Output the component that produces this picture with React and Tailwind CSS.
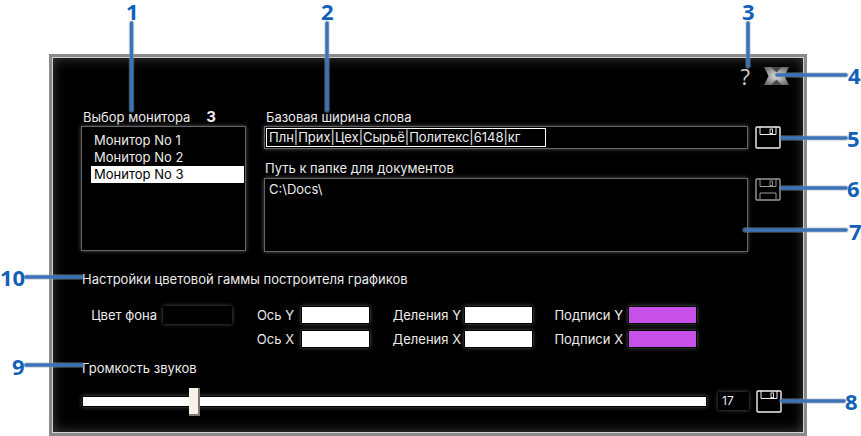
const glow = "shadow-[0_0_4px_rgba(255,255,255,0.35)]";

function SaveIcon({ dim }) {
  const c = dim ? "#9a9a9a" : "#f2f2f2";
  return (
    <button className="w-[26px] h-[23px] block shrink-0">
      <svg width="26" height="23" viewBox="0 0 26 23" fill="none">
        <rect x="1" y="1" width="24" height="21" rx="1" stroke={c} strokeWidth="1.4" />
        <path d="M5 1v7.5h16V1" stroke={c} strokeWidth="1" />
        <rect x="15" y="3" width="2.5" height="4.5" stroke={c} strokeWidth="0.9" />
        {dim && <path d="M5 21v-6h16v6" stroke={c} strokeWidth="1" />}
      </svg>
    </button>
  );
}

function CloseIcon() {
  return (
    <svg width="27" height="20" viewBox="0 0 27 20" className="blur-[0.7px]">
      <defs>
        <radialGradient id="xg" cx="50%" cy="50%" r="60%">
          <stop offset="0%" stopColor="#e4e4e4" />
          <stop offset="100%" stopColor="#6a6a6a" />
        </radialGradient>
      </defs>
      <path d="M1 1H26L21.5 10L26 19H1L5.5 10Z" fill="url(#xg)" />
      <path d="M8 1L13.5 6.5L19 1ZM8 19L13.5 13.5L19 19Z" fill="#4a4a4a" />
    </svg>
  );
}

function Swatch({ color }) {
  return <div className={`w-[69px] h-[18px] border border-black shrink-0 ${color} ${glow}`} />;
}

function ColorField({ label, color, gap }) {
  return (
    <div className={`flex items-center justify-end ${gap}`}>
      <span>{label}</span>
      <Swatch color={color} />
    </div>
  );
}

const callouts = [
  { n: "1", x: 126, y: 0 },
  { n: "2", x: 321, y: 0 },
  { n: "3", x: 742, y: 0 },
  { n: "4", x: 848, y: 64 },
  { n: "5", x: 847, y: 127 },
  { n: "6", x: 847, y: 177 },
  { n: "7", x: 849, y: 220 },
  { n: "8", x: 845, y: 390 },
  { n: "9", x: 12, y: 355 },
  { n: "10", x: 0, y: 266 },
];

const leaders = [
  "M131.5 23V110",
  "M327 23V110",
  "M748 23V66",
  "M777 75H846",
  "M782 138H846",
  "M782 188H846",
  "M745 230H846",
  "M782 401H844",
  "M26 365H82",
  "M26 277H81",
];

export default function App() {
  return (
    <div className="relative w-[861px] h-[436px] bg-white overflow-hidden font-['Inter',sans-serif]">
      <div className="absolute left-[49px] top-[54px] w-[758px] h-[382px] border-[3px] border-[#8a8a8a] bg-black shadow-[inset_0_0_0_1px_#c8c8c8]">
        <div className="h-full pl-[29px] pr-[23px] pt-[8px] text-[13px] leading-[16px] text-[#ececec] shadow-[inset_0_0_14px_rgba(255,255,255,0.28)]">
          <div className="flex justify-end items-center gap-[13px] -mr-[9px] h-[22px]">
            <span className="text-[22px] leading-none text-[#cfcfcf] font-['Open_Sans',sans-serif]">?</span>
            <CloseIcon />
          </div>

          <div className="flex gap-[18px] mt-[21px]">
            <div className="w-[165px] shrink-0">
              <div className="flex justify-between h-[18px] pl-[2px] pr-[30px] items-center">
                <span>Выбор монитора</span>
                <span className="font-bold text-[15px]">З</span>
              </div>
              <div className={`h-[125px] px-[9px] py-[5px] border border-[#666] ${glow}`}>
                <div className="pl-[3px] h-[17px] leading-[17px]">Монитор No 1</div>
                <div className="pl-[3px] h-[17px] leading-[17px]">Монитор No 2</div>
                <div className="pl-[3px] h-[17px] leading-[17px] w-[153px] bg-white text-black outline-1 outline-dotted outline-black">Монитор No 3</div>
              </div>
            </div>

            <div className="flex-1">
              <div className="h-[18px] pl-[2px] flex items-center">Базовая ширина слова</div>
              <div className="flex gap-[7px] items-start">
                <div className={`flex-1 h-[23px] border border-[#666] p-[1px] ${glow}`}>
                  <div className="w-[280px] h-[19px] border border-white leading-[17px] pl-[2px] whitespace-nowrap">Плн|Прих|Цех|Сырьё|Политекс|6148|кг</div>
                </div>
                <SaveIcon />
              </div>
              <div className="h-[18px] mt-[10px] pl-[1px] flex items-center">Путь к папке для документов</div>
              <div className="flex gap-[7px] items-start mt-[1px]">
                <div className={`flex-1 h-[74px] border border-[#666] px-[4px] py-[2px] ${glow}`}>C:\Docs\</div>
                <SaveIcon dim />
              </div>
            </div>
          </div>

          <div className="mt-[18px] pl-[1px] h-[18px] flex items-center">Настройки цветовой гаммы построителя графиков</div>

          <div className="mt-[18px] grid grid-cols-[151px_138px_163px_164px] w-[616px] gap-y-[6px]">
            <ColorField label="Цвет фона" color="bg-black" gap="gap-[6px]" />
            <ColorField label="Ось Y" color="bg-white" gap="gap-[7px]" />
            <ColorField label="Деления Y" color="bg-white" gap="gap-[3px]" />
            <ColorField label="Подписи Y" color="bg-[#c650e8]" gap="gap-[5px]" />
            <div />
            <ColorField label="Ось X" color="bg-white" gap="gap-[7px]" />
            <ColorField label="Деления X" color="bg-white" gap="gap-[3px]" />
            <ColorField label="Подписи X" color="bg-[#c650e8]" gap="gap-[5px]" />
          </div>

          <div className="mt-[11px] pl-[1px] h-[18px] flex items-center">Громкость звуков</div>

          <div className="flex items-center mt-[11px] h-[26px]">
            <div className={`relative w-[625px] shrink-0 h-[11px] ml-[1px] bg-white border border-black ${glow}`}>
              <div className="absolute left-[106px] -top-[9px] w-[11px] h-[28px] bg-[#f7f1e8] border-r-2 border-b-2 border-[#777]" />
            </div>
            <div className={`ml-[11px] w-[31px] shrink-0 h-[18px] bg-black border border-black px-[3px] text-[12px] leading-[16px] ${glow}`}>17</div>
            <div className="ml-[7px]"><SaveIcon /></div>
          </div>
        </div>
      </div>

      <svg className="absolute inset-0 pointer-events-none" width="861" height="436" fill="none">
        {leaders.map((d) => (
          <g key={d}>
            <path d={d} stroke="#9aa6b4" strokeWidth="5.5" strokeLinecap="round" opacity="0.45" />
            <path d={d} stroke="#3b73b8" strokeWidth="3.5" strokeLinecap="round" />
          </g>
        ))}
      </svg>

      {callouts.map((c) => (
        <span
          key={c.n}
          className="absolute text-[#1260b8] text-[22px] leading-[22px] font-bold font-['Open_Sans',sans-serif]"
          style={{ left: c.x, top: c.y }}
        >
          {c.n}
        </span>
      ))}
    </div>
  );
}
